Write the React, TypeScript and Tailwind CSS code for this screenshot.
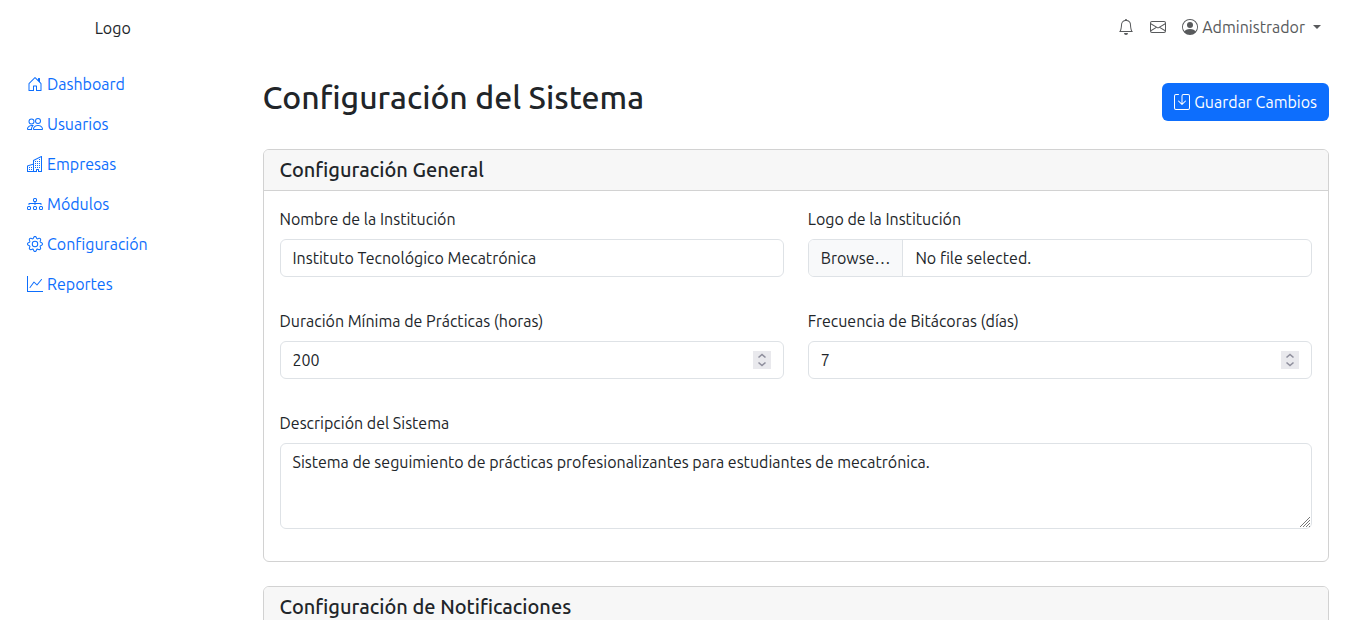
import { useRef, useState } from "react";
import type { ReactNode } from "react";
import type { IconType } from "react-icons";
import {
  BsBell,
  BsBuildings,
  BsDiagram3,
  BsEnvelope,
  BsGear,
  BsGraphUp,
  BsHouseDoor,
  BsPeople,
  BsPersonCircle,
  BsSave,
} from "react-icons/bs";

const links: { label: string; icon: IconType }[] = [
  { label: "Dashboard", icon: BsHouseDoor },
  { label: "Usuarios", icon: BsPeople },
  { label: "Empresas", icon: BsBuildings },
  { label: "Módulos", icon: BsDiagram3 },
  { label: "Configuración", icon: BsGear },
  { label: "Reportes", icon: BsGraphUp },
];

const control =
  "block w-full rounded-md border border-[#dee2e6] bg-white px-3 text-[#212529] outline-none focus:border-[#86b7fe]";

function Sidebar() {
  return (
    <aside className="w-1/6 shrink-0 py-4">
      <div className="pr-0.5 text-center leading-6">Logo</div>
      <nav className="mt-6 px-[27px]">
        <ul>
          {links.map(({ label, icon: Icon }) => (
            <li key={label}>
              <a href="#" className="flex items-center gap-1 py-2 leading-6 text-[#0d6efd]">
                <Icon className="size-4 shrink-0" />
                {label}
              </a>
            </li>
          ))}
        </ul>
      </nav>
    </aside>
  );
}

function TopBar() {
  return (
    <header className="flex items-center justify-end gap-4 px-2 text-[#585a5c]">
      <a href="#" aria-label="Notificaciones">
        <BsBell className="size-4" />
      </a>
      <a href="#" aria-label="Mensajes">
        <BsEnvelope className="size-4" />
      </a>
      <button type="button" className="flex items-center gap-1 leading-6">
        <BsPersonCircle className="size-4" />
        Administrador
        <span className="ml-1 border-x-4 border-t-4 border-x-transparent border-t-current" />
      </button>
    </header>
  );
}

function Card({ title, children }: { title: string; children?: ReactNode }) {
  return (
    <section className="mb-6 overflow-hidden rounded-md border border-[#d2d2d2] bg-white">
      <h2 className="border-b border-[#d2d2d2] bg-[#f7f7f7] px-4 py-2 text-xl leading-6 font-medium">
        {title}
      </h2>
      <div className="p-4">{children}</div>
    </section>
  );
}

function Field({ id, label, children }: { id: string; label: string; children: ReactNode }) {
  return (
    <div className="mb-4">
      <label htmlFor={id} className="mb-2 block leading-6">
        {label}
      </label>
      {children}
    </div>
  );
}

function NumberInput({ id, initial }: { id: string; initial: number }) {
  const [value, setValue] = useState(initial);
  return (
    <div className="relative">
      <input
        id={id}
        type="number"
        value={value}
        onChange={(e) => setValue(Number(e.target.value))}
        className={`${control} h-[38px] [appearance:textfield] [&::-webkit-inner-spin-button]:appearance-none`}
      />
      <div className="absolute inset-y-0 right-[13px] flex items-center">
        <div className="flex h-[18px] w-[18px] flex-col bg-[#e9e9ed] text-[#8f8f9d]">
          <button type="button" aria-label="Aumentar" onClick={() => setValue(value + 1)}>
            <svg viewBox="0 0 18 9" className="block h-[9px] w-[18px]" fill="none" stroke="currentColor" strokeWidth="1.6">
              <path d="M5.5 6.5 9 3.5l3.5 3" />
            </svg>
          </button>
          <button type="button" aria-label="Disminuir" onClick={() => setValue(value - 1)}>
            <svg viewBox="0 0 18 9" className="block h-[9px] w-[18px]" fill="none" stroke="currentColor" strokeWidth="1.6">
              <path d="M5.5 2.5 9 5.5l3.5-3" />
            </svg>
          </button>
        </div>
      </div>
    </div>
  );
}

function FileInput({ id }: { id: string }) {
  const input = useRef<HTMLInputElement>(null);
  const [name, setName] = useState("No file selected.");
  return (
    <div className="relative flex h-[38px] items-stretch overflow-hidden rounded-md border border-[#dee2e6] bg-white">
      <button
        type="button"
        onClick={() => input.current?.click()}
        className="border-r border-[#dee2e6] bg-[#f8f9fa] px-3"
      >
        Browse…
      </button>
      <span className="self-center px-3">{name}</span>
      <input
        ref={input}
        id={id}
        type="file"
        className="sr-only"
        onChange={(e) => setName(e.target.files?.[0]?.name ?? "No file selected.")}
      />
    </div>
  );
}

export default function App() {
  return (
    <div className="flex h-screen overflow-hidden bg-white font-['Ubuntu','Noto_Sans',sans-serif] text-base text-[#212529]">
      <Sidebar />
      <div className="min-w-0 flex-1 pt-[15px] pr-9 pl-[35px]">
        <TopBar />
        <main className="pt-10">
          <div className="mb-6 flex items-center justify-between">
            <h1 className="mb-2.5 text-[32px] leading-9 font-medium">Configuración del Sistema</h1>
            <button
              type="button"
              className="flex h-[38px] items-center gap-1 rounded-md bg-[#0d6efd] px-3 text-white"
            >
              <BsSave className="size-4" />
              Guardar Cambios
            </button>
          </div>

          <Card title="Configuración General">
            <div className="grid grid-cols-2 gap-x-6 gap-y-4">
              <Field id="nombre" label="Nombre de la Institución">
                <input
                  id="nombre"
                  type="text"
                  defaultValue="Instituto Tecnológico Mecatrónica"
                  className={`${control} h-[38px]`}
                />
              </Field>
              <Field id="logo" label="Logo de la Institución">
                <FileInput id="logo" />
              </Field>
              <Field id="duracion" label="Duración Mínima de Prácticas (horas)">
                <NumberInput id="duracion" initial={200} />
              </Field>
              <Field id="frecuencia" label="Frecuencia de Bitácoras (días)">
                <NumberInput id="frecuencia" initial={7} />
              </Field>
              <div className="col-span-2">
                <Field id="descripcion" label="Descripción del Sistema">
                  <div className="relative">
                    <textarea
                      id="descripcion"
                      rows={3}
                      defaultValue="Sistema de seguimiento de prácticas profesionalizantes para estudiantes de mecatrónica."
                      className={`${control} h-[86px] resize-y py-1.5 leading-6 [&::-webkit-resizer]:bg-transparent`}
                    />
                    <svg
                      viewBox="0 0 12 12"
                      className="pointer-events-none absolute right-px bottom-px size-3"
                      fill="none"
                      stroke="#777"
                      aria-hidden="true"
                    >
                      <path d="M1 11 11 1M4 11l7-7M7 11l4-4M10 11l1-1" />
                    </svg>
                  </div>
                </Field>
              </div>
            </div>
          </Card>

          <Card title="Configuración de Notificaciones" />
        </main>
      </div>
    </div>
  );
}
